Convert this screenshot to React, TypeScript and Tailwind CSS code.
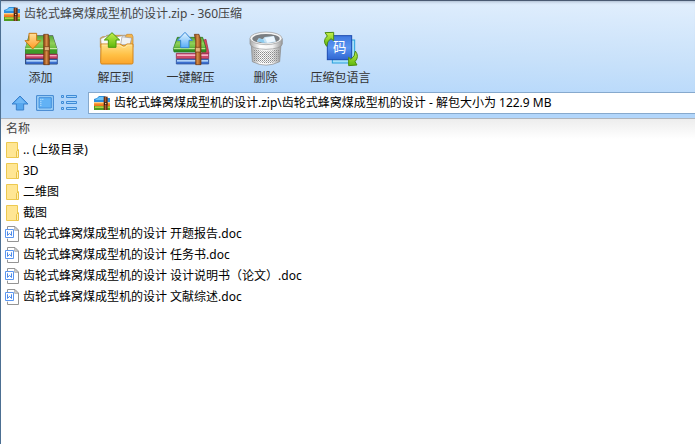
import React from "react";

const AddIcon = () => (
  <svg viewBox="70 21 108 108" className="size-9 overflow-visible" aria-hidden="true">
    <defs>
      <linearGradient id="green" x1="0" y1="0" x2="0" y2="1">
        <stop offset="0" stopColor="#58a83c" />
        <stop offset="0.6" stopColor="#8fcf58" />
        <stop offset="1" stopColor="#6cbc3c" />
      </linearGradient>
      <linearGradient id="belt" x1="0" y1="0" x2="1" y2="0">
        <stop offset="0" stopColor="#8a4512" />
        <stop offset="0.5" stopColor="#d58c48" />
        <stop offset="1" stopColor="#8a4512" />
      </linearGradient>
      <linearGradient id="orange" x1="0" y1="0" x2="0" y2="1">
        <stop offset="0" stopColor="#ffe09a" />
        <stop offset="1" stopColor="#ff9a22" />
      </linearGradient>
    </defs>
    <path d="M87 34H160L173 74V121H76V74Z" fill="#4a5a48" />
    <path d="M88 36H159L171 72H77Z" fill="url(#green)" />
    <path d="M77 72H172V89H77Z" fill="#3f9c28" />
    <path d="M77 72H172V76H77Z" fill="#c2eda0" />
    <path d="M78 91H173V104H78Z" fill="#c8446a" stroke="#8a2444" strokeWidth="2" />
    <path d="M80 93H171V97H80Z" fill="#f5a8be" />
    <path d="M78 106H173V120H78Z" fill="#3c70d0" stroke="#24468f" strokeWidth="2" />
    <path d="M80 108H171V113H80Z" fill="#b0d2f8" />
    <path d="M132 31H146L149 48V122H132Z" fill="url(#belt)" stroke="#6d340c" strokeWidth="2" />
    <path d="M134 68H149V80H134Z" fill="#e3b27a" stroke="#6d340c" strokeWidth="2" />
    <path d="M88 28H111V50H123L99 75L76 50H88Z" fill="url(#orange)" stroke="#c97912" strokeWidth="3" strokeLinejoin="round" />
  </svg>
);

const ExtractToIcon = () => (
  <svg viewBox="294 21 108 108" className="size-9 overflow-visible" aria-hidden="true">
    <defs>
      <linearGradient id="folder" x1="0" y1="0" x2="0" y2="1">
        <stop offset="0" stopColor="#ffe08a" />
        <stop offset="0.55" stopColor="#ffc044" />
        <stop offset="1" stopColor="#fba42c" />
      </linearGradient>
      <linearGradient id="lime" x1="0" y1="0" x2="0" y2="1">
        <stop offset="0" stopColor="#c6f04c" />
        <stop offset="1" stopColor="#5cb80c" />
      </linearGradient>
    </defs>
    <path d="M301 42L308 38H320V34H380V31H396L399 38V70H301Z" fill="#f3b64e" stroke="#c4842a" strokeWidth="2" />
    <path d="M302 44L330 32L346 62L304 64Z" fill="#fafafa" stroke="#999" strokeWidth="2" />
    <path d="M350 38L375 34L380 62H346Z" fill="#fff" stroke="#8f8f8f" strokeWidth="2" />
    <path d="M366 38L395 42L390 62H362Z" fill="#f0f2f4" stroke="#999" strokeWidth="2" />
    <path d="M303 60H360L370 66H374L380 60H399V116Q399 120 395 120H306Q302 120 302 116Z" fill="url(#folder)" stroke="#d38418" strokeWidth="3" />
    <path d="M305 63H358L369 70H376L382 63H396" fill="none" stroke="#fff2b8" strokeWidth="2" />
    <path d="M336 26L359 48H348V70H325V48H313Z" fill="url(#lime)" stroke="#4a980c" strokeWidth="3" strokeLinejoin="round" />
  </svg>
);

const OneKeyIcon = () => (
  <svg viewBox="69 21 108 108" className="size-9 overflow-visible" aria-hidden="true">
    <defs>
      <linearGradient id="sky" x1="0" y1="0" x2="0" y2="1">
        <stop offset="0" stopColor="#e2f4ff" />
        <stop offset="1" stopColor="#58adf8" />
      </linearGradient>
    </defs>
    <path d="M155 50L168 46L177 88H157Z" fill="#d84a60" stroke="#9a2440" strokeWidth="2" />
    <path d="M79 88H176V104H79Z" fill="#cc4a6e" stroke="#8a2444" strokeWidth="2" />
    <path d="M81 91H174V96H81Z" fill="#f5b3c6" />
    <path d="M79 106H176V120H79Z" fill="#3c70d0" stroke="#24468f" strokeWidth="2" />
    <path d="M81 108H174V113H81Z" fill="#b0d2f8" />
    <path d="M82 40H158L168 72V84H72L70 74Z" fill="#2f8f22" stroke="#2b6f1c" strokeWidth="2" />
    <path d="M84 41H157L166 70H72Z" fill="url(#green)" />
    <path d="M71 71H166V76H71Z" fill="#b6e88c" />
    <path d="M133 31H147L153 50V122H137V50Z" fill="url(#belt)" stroke="#6d340c" strokeWidth="2" />
    <path d="M136 70H151V84H136Z" fill="#e3b27a" stroke="#6d340c" strokeWidth="2" />
    <path d="M105 25L127 49H117V71H92V49H82Z" fill="url(#sky)" stroke="#3585d8" strokeWidth="3" strokeLinejoin="round" />
  </svg>
);

const TrashIcon = () => (
  <svg viewBox="294 21 108 108" className="size-9 overflow-visible" aria-hidden="true">
    <defs>
      <linearGradient id="metal" x1="0" y1="0" x2="1" y2="0">
        <stop offset="0" stopColor="#a6a6a6" />
        <stop offset="0.3" stopColor="#fff" />
        <stop offset="0.7" stopColor="#f2f2f2" />
        <stop offset="1" stopColor="#999" />
      </linearGradient>
      <pattern id="holes" width="6" height="6" patternUnits="userSpaceOnUse">
        <rect x="0" y="0" width="3" height="3" fill="#8a8a8a" />
        <rect x="3" y="3" width="3" height="3" fill="#b4b4b4" />
      </pattern>
    </defs>
    <path d="M304 62L307 113Q348 134 389 113L393 62Z" fill="url(#metal)" stroke="#888" strokeWidth="2" />
    <path d="M309 74L311 110Q348 125 385 110L388 74Q348 88 309 74Z" fill="url(#holes)" />
    <path d="M300 44V60Q304 75 348 76Q393 75 397 60V44Z" fill="url(#metal)" stroke="#8d8d8d" strokeWidth="2" />
    <ellipse cx="348" cy="43" rx="48" ry="19" fill="#f5f5f5" stroke="#999" strokeWidth="2" />
    <ellipse cx="348" cy="44" rx="41" ry="14" fill="#7a7e82" />
    <path d="M320 52L326 43L338 46L344 39L372 36L378 53Q350 61 320 52Z" fill="#c5e2f5" />
    <path d="M345 42L371 37L376 52L352 56Z" fill="#edf7ff" />
    <path d="M321 52L328 43L341 47L344 57Z" fill="#8fcdf0" />
  </svg>
);

const LanguageIcon = () => (
  <svg viewBox="99 21 108 108" className="size-9 overflow-visible" aria-hidden="true">
    <defs>
      <linearGradient id="blue" x1="0" y1="0" x2="0" y2="1">
        <stop offset="0" stopColor="#3f78e0" />
        <stop offset="0.5" stopColor="#5a94f0" />
        <stop offset="1" stopColor="#2f66d2" />
      </linearGradient>
    </defs>
    <rect x="127" y="48" width="67" height="69" fill="#a5e2fb" stroke="#28a0dd" strokeWidth="3" />
    <rect x="112" y="35" width="73" height="72" fill="url(#blue)" stroke="#1c4bb0" strokeWidth="3" />
    <text x="149" y="85" textAnchor="middle" fill="#fff" fontSize="40" className="font-['Noto_Sans_CJK_SC',sans-serif]">
      码
    </text>
    <path d="M110 67Q96 50 112 36L105 26L131 25V50L123 44Q111 50 110 67Z" fill="url(#lime)" stroke="#4f8c10" strokeWidth="3" strokeLinejoin="round" />
    <path d="M196 81Q209 98 195 113L201 123L176 125V100L183 106Q195 98 196 81Z" fill="url(#lime)" stroke="#4f8c10" strokeWidth="3" strokeLinejoin="round" />
  </svg>
);

const ZipIcon = () => (
  <svg viewBox="0 0 48 42" className="h-3.5 w-4 shrink-0" aria-hidden="true">
    <path d="M0 9L9 6L15 0H33L37 6H48V18H0Z" fill="#2f8fdc" />
    <path d="M3 12L12 6L16 3H30V12Z" fill="#6cc4f8" />
    <path d="M0 18H48V30H0Z" fill="#ee7420" />
    <path d="M0 18H48V21H0Z" fill="#f6cf98" />
    <path d="M0 21H48V25H0Z" fill="#fba23c" />
    <path d="M0 30H48V42H0Z" fill="#4f9c20" />
    <path d="M3 31H48V36H3Z" fill="#b2cf40" />
    <path d="M29 2H41V42H29Z" fill="#6b3217" />
    <path d="M33 2H36V42H33Z" fill="#a36238" />
    <path d="M30 19H40V27H30Z" fill="#3b1a0c" />
    <path d="M33 21H37V25H33Z" fill="#f0c8a0" />
  </svg>
);

const UpIcon = () => (
  <svg viewBox="0 0 54 48" className="h-4 w-[18px]" aria-hidden="true">
    <path d="M27 3L51 27H38V45H16V27H3Z" fill="#56a7ee" stroke="#3a80cc" strokeWidth="3" strokeLinejoin="round" />
    <path d="M27 7L43 24H11Z" fill="#70b8f6" />
  </svg>
);

const PreviewIcon = () => (
  <svg viewBox="0 0 54 48" className="h-4 w-[18px]" aria-hidden="true">
    <path d="M2 2H52V46H2Z" fill="#a8d8fc" stroke="#3a80cc" strokeWidth="3" />
    <path d="M9 8H46V39H9Z" fill="#62b2f5" stroke="#4490dc" strokeWidth="3" />
    <path d="M13 13H16M13 19H16M13 25H16M13 31H16M19 13H22" stroke="#d5edff" strokeWidth="3" />
  </svg>
);

const ListIcon = () => (
  <svg viewBox="0 0 48 48" className="size-4" aria-hidden="true">
    <g fill="#a4d4fb" stroke="#3f8bd6" strokeWidth="3">
      <path d="M1.5 1.5H7.5V7.5H1.5Z" />
      <path d="M1.5 19.5H7.5V25.5H1.5Z" />
      <path d="M1.5 37.5H7.5V43.5H1.5Z" />
      <path d="M16.500 1.5H46.5V7.5H16.5Z" />
      <path d="M16.5 19.5H46.5V25.5H16.5Z" />
      <path d="M16.5 37.5H46.5V43.5H16.5Z" />
    </g>
  </svg>
);

const FolderIcon = () => (
  <svg viewBox="0 0 42 48" className="h-4 w-3.5" aria-hidden="true">
    <path d="M1.5 1.5H34.5V46.5H1.5Z" fill="#ffe694" stroke="#edc950" strokeWidth="3" />
    <path d="M31.5 46.5V28L37.5 23V46.5Z" fill="#fff0b5" stroke="#e9c348" strokeWidth="3" />
  </svg>
);

const DocIcon = () => (
  <svg viewBox="0 0 42 48" className="h-4 w-3.5" aria-hidden="true">
    <path d="M7.5 12V1.5H30L40.5 12V46.500H7.5V38" fill="#fff" stroke="#949494" strokeWidth="3" />
    <path d="M29 3V13H39Z" fill="#ddd" stroke="#949494" strokeWidth="2" />
    <path d="M1.5 10.5H25.5V34.5H1.5Z" fill="#fff" stroke="#5b96f0" strokeWidth="3" />
    <path d="M7.5 16V28.5L13.5 22L19.5 28.5V16" fill="none" stroke="#4c89e8" strokeWidth="3" />
  </svg>
);

const tools = [
  { label: "添加", icon: <AddIcon /> },
  { label: "解压到", icon: <ExtractToIcon /> },
  { label: "一键解压", icon: <OneKeyIcon /> },
  { label: "删除", icon: <TrashIcon /> },
  { label: "压缩包语言", icon: <LanguageIcon /> },
];

const files = [
  { name: ".. (上级目录)", folder: true },
  { name: "3D", folder: true },
  { name: "二维图", folder: true },
  { name: "截图", folder: true },
  { name: "齿轮式蜂窝煤成型机的设计 开题报告.doc", folder: false },
  { name: "齿轮式蜂窝煤成型机的设计 任务书.doc", folder: false },
  { name: "齿轮式蜂窝煤成型机的设计 设计说明书（论文）.doc", folder: false },
  { name: "齿轮式蜂窝煤成型机的设计 文献综述.doc", folder: false },
];

const App = () => {
  return (
    <div className="min-h-screen flex flex-col bg-white border-l border-l-[#4c6f92] text-black text-[12px] leading-4 font-['Noto_Sans','Noto_Sans_CJK_SC',sans-serif]">
      <header className="border-t border-t-[#4a5a72] border-b border-b-[#b0b5bc] bg-linear-182 from-[#e2effd] from-0% via-[#c8e1fa] via-45% to-[#b2d6fb] to-80% shadow-[inset_0_3px_3px_-2px_#a9b8cc]">
        <div className="flex items-center gap-1 h-[26px] px-[3px]">
          <ZipIcon />
          <h1 className="text-[#444]">齿轮式蜂窝煤成型机的设计.zip - 360压缩</h1>
        </div>
        <div className="flex px-0.5 pt-1">
          {tools.map((tool) => (
            <button key={tool.label} type="button" className="w-[75px] flex flex-col items-center gap-[3px] text-[#333] whitespace-nowrap">
              {tool.icon}
              {tool.label}
            </button>
          ))}
        </div>
        <div className="flex items-center pt-1.5 pb-1 pl-2.5">
          <div className="flex items-center gap-[7px]">
            <button type="button" aria-label="向上">
              <UpIcon />
            </button>
            <button type="button" aria-label="预览">
              <PreviewIcon />
            </button>
            <button type="button" aria-label="列表">
              <ListIcon />
            </button>
          </div>
          <label className="flex-1 flex items-center gap-1 h-[22px] ml-[11px] pl-[5px] bg-white border border-r-0 border-[#86a9cd]">
            <ZipIcon />
            <input
              type="text"
              aria-label="地址"
              className="flex-1 min-w-0 outline-none"
              defaultValue="齿轮式蜂窝煤成型机的设计.zip\齿轮式蜂窝煤成型机的设计 - 解包大小为 122.9 MB"
            />
          </label>
        </div>
      </header>
      <main className="flex-1">
        <table className="w-full border-collapse">
          <thead>
            <tr className="h-5 bg-linear-to-b from-[#ededed] to-white">
              <th scope="col" className="pl-[5px] text-left font-normal text-[#444]">
                名称
              </th>
            </tr>
          </thead>
          <tbody>
            {files.map((file) => (
              <tr key={file.name} className="h-[21px]">
                <td className="p-0">
                  <div className={file.folder ? "flex items-center gap-[3px] pl-[5px]" : "flex items-center gap-1 pl-1"}>
                    {file.folder ? <FolderIcon /> : <DocIcon />}
                    <span>{file.name}</span>
                  </div>
                </td>
              </tr>
            ))}
          </tbody>
        </table>
      </main>
    </div>
  );
};

export default App;
